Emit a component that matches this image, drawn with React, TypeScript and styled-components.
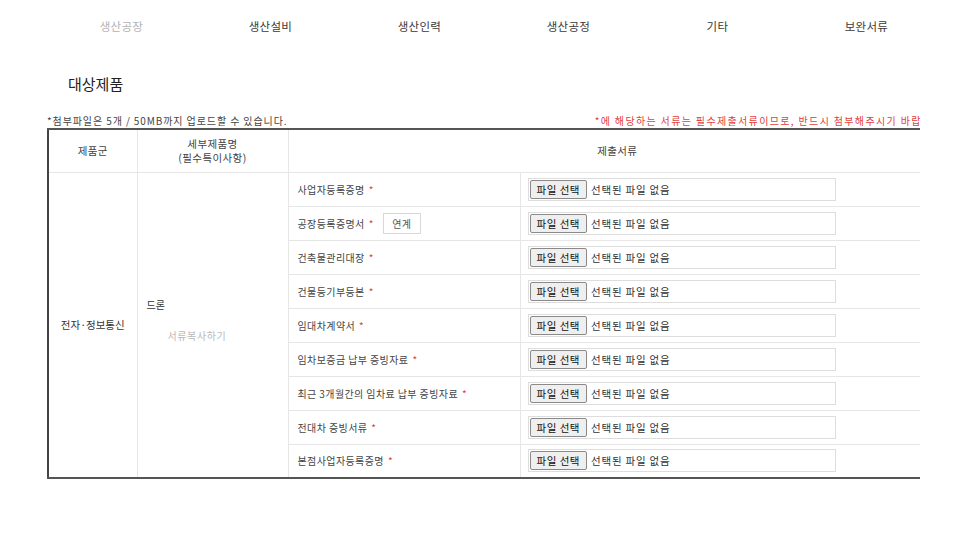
import React from "react";
import styled, { createGlobalStyle } from "styled-components";

const Global = createGlobalStyle`
  html, body { margin: 0; padding: 0; background: #fff; }
  body { font-family: "Noto Sans CJK KR", "Noto Sans", sans-serif; color: #333; }
  * { box-sizing: border-box; }
`;

const Page = styled.div`
  width: 966px;
  height: 547px;
  overflow: hidden;
  padding-left: 47px;
`;

const Nav = styled.nav`
  display: flex;
  padding-top: 17px;
  height: 36px;
`;

const NavItem = styled.div<{ $muted?: boolean }>`
  width: 149px;
  text-align: center;
  font-size: 11.5px;
  line-height: 18px;
  letter-spacing: 0.3px;
  color: ${(p) => (p.$muted ? "#b3b3b3" : "#3a3a3a")};
`;

const Title = styled.h2`
  margin: 38px 0 0 21px;
  font-size: 15px;
  font-weight: 400;
  line-height: 20px;
  color: #222;
`;

const Clip = styled.div`
  width: 873px;
  overflow: hidden;
  margin-top: 18px;
`;

const Inner = styled.div`
  width: 900px;
`;

const NoteRow = styled.div`
  display: flex;
  justify-content: space-between;
  align-items: flex-end;
  font-size: 10px;
  line-height: 14px;
  height: 16px;
  white-space: nowrap;
`;

const Note = styled.span<{ $red?: boolean }>`
  color: ${(p) => (p.$red ? "#e0403c" : "#444")};
  letter-spacing: ${(p) => (p.$red ? "1.35px" : "0.9px")};
`;

const Table = styled.table`
  width: 900px;
  border-collapse: collapse;
  table-layout: fixed;
  border-top: 2px solid #555;
  border-bottom: 2px solid #555;
  border-left: 2px solid #444;
`;

const Col = styled.col<{ $w?: number }>`
  width: ${(p) => (p.$w ? `${p.$w}px` : "auto")};
`;

const Th = styled.th`
  height: 43px;
  font-weight: 400;
  font-size: 10.5px;
  line-height: 14px;
  letter-spacing: 0.4px;
  color: #444;
  border-right: 1px solid #e6e6e6;
  border-bottom: 1px solid #e6e6e6;
  text-align: center;
  padding: 0;
`;

const Td = styled.td`
  border-right: 1px solid #e6e6e6;
  border-bottom: 1px solid #e6e6e6;
  padding: 0;
  font-size: 10px;
  color: #444;
  height: 34px;
`;

const GroupCell = styled(Td)`
  text-align: center;
  font-size: 10.5px;
  color: #333;
`;

const ProductCell = styled(Td)`
  vertical-align: middle;
  padding-left: 9px;
`;

const ProductName = styled.div`
  font-size: 10px;
  color: #333;
  margin-top: -10px;
`;

const CopyLink = styled.div`
  font-size: 10px;
  color: #b8b8b8;
  letter-spacing: 0.6px;
  margin: 16px 0 0 21px;
`;

const DocCell = styled(Td)`
  padding-left: 9px;
  letter-spacing: 0.4px;
`;

const DocInner = styled.div`
  display: flex;
  align-items: center;
`;

const Star = styled.span`
  color: #e0403c;
  margin-left: 4px;
`;

const LinkButton = styled.span`
  display: inline-flex;
  align-items: center;
  justify-content: center;
  margin-left: 9px;
  width: 38px;
  height: 21px;
  border: 1px solid #d8d8d8;
  background: #fff;
  color: #555;
  font-size: 10px;
`;

const FileCell = styled(Td)`
  padding-left: 7px;
`;

const FileBox = styled.div`
  display: flex;
  align-items: center;
  width: 308px;
  height: 23px;
  border: 1px solid #ddd;
  padding-left: 1px;
  gap: 4px;
`;

const FileButton = styled.span`
  display: inline-flex;
  align-items: center;
  justify-content: center;
  height: 19px;
  padding: 0 6px;
  background: #efefef;
  border: 1px solid #8a8a8a;
  border-radius: 2px;
  font-size: 10.5px;
  color: #111;
  letter-spacing: 0.5px;
`;

const FileText = styled.span`
  font-size: 10.5px;
  color: #333;
  letter-spacing: 0.8px;
`;

const navItems = ["생산공장", "생산설비", "생산인력", "생산공정", "기타", "보완서류"];

const docs: { name: string; link?: boolean }[] = [
  { name: "사업자등록증명" },
  { name: "공장등록증명서", link: true },
  { name: "건축물관리대장" },
  { name: "건물등기부등본" },
  { name: "임대차계약서" },
  { name: "임차보증금 납부 증빙자료" },
  { name: "최근 3개월간의 임차료 납부 증빙자료" },
  { name: "전대차 증빙서류" },
  { name: "본점사업자등록증명" },
];

export default function App() {
  return (
    <Page>
      <Global />
      <Nav>
        {navItems.map((n, i) => (
          <NavItem key={n} $muted={i === 0}>
            {n}
          </NavItem>
        ))}
      </Nav>
      <Title>대상제품</Title>
      <Clip>
        <Inner>
          <NoteRow>
            <Note>*첨부파일은 5개 / 50MB까지 업로드할 수 있습니다.</Note>
            <Note $red>*에 해당하는 서류는 필수제출서류이므로, 반드시 첨부해주시기 바랍니다.</Note>
          </NoteRow>
          <Table>
            <colgroup>
              <Col $w={89} />
              <Col $w={151} />
              <Col $w={232} />
              <Col />
            </colgroup>
            <thead>
              <tr>
                <Th>제품군</Th>
                <Th>
                  세부제품명
                  <br />
                  (필수특이사항)
                </Th>
                <Th colSpan={2}>제출서류</Th>
              </tr>
            </thead>
            <tbody>
              {docs.map((d, i) => (
                <tr key={d.name}>
                  {i === 0 && (
                    <>
                      <GroupCell rowSpan={docs.length}>전자·정보통신</GroupCell>
                      <ProductCell rowSpan={docs.length}>
                        <ProductName>드론</ProductName>
                        <CopyLink>서류복사하기</CopyLink>
                      </ProductCell>
                    </>
                  )}
                  <DocCell>
                    <DocInner>
                      {d.name}
                      <Star>*</Star>
                      {d.link && <LinkButton>연계</LinkButton>}
                    </DocInner>
                  </DocCell>
                  <FileCell>
                    <FileBox>
                      <FileButton>파일 선택</FileButton>
                      <FileText>선택된 파일 없음</FileText>
                    </FileBox>
                  </FileCell>
                </tr>
              ))}
            </tbody>
          </Table>
        </Inner>
      </Clip>
    </Page>
  );
}
